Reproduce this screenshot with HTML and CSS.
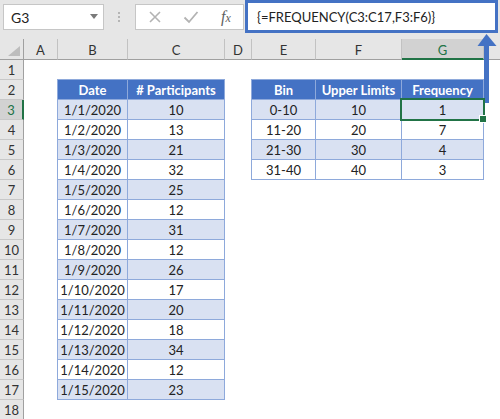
FILE: index.html
```html
<!DOCTYPE html>
<html>
<head>
<meta charset="utf-8">
<link rel="stylesheet" href="styles.css">
</head>
<body>
<div class="app">
  <div class="fbar">
    <div class="namebox"><span class="ref">G3</span><span class="dd"></span></div>
    <div class="dots"><i></i><i></i><i></i></div>
    <div class="fxbox">
      <svg class="ico" width="14" height="14" viewBox="0 0 14 14"><path d="M2 2 L12 12 M12 2 L2 12" stroke="#b3b3b3" stroke-width="1.6" fill="none"/></svg>
      <svg class="ico" width="16" height="14" viewBox="0 0 16 14"><path d="M1.5 7.5 L6 12 L14.5 2" stroke="#b3b3b3" stroke-width="1.8" fill="none"/></svg>
      <span class="fx">f<span class="fxx">x</span></span>
    </div>
    <div class="formula">{=FREQUENCY(C3:C17,F3:F6)}</div>
  </div>
  <div class="sheet">
    <div class="ch corner"><span class="tri"></span></div>
    <div class="ch">A</div>
    <div class="ch">B</div>
    <div class="ch">C</div>
    <div class="ch">D</div>
    <div class="ch">E</div>
    <div class="ch">F</div>
    <div class="ch selc">G</div>
    <div class="ch last"></div>

    <div class="rh">1</div>
    <div class="rh">2</div>
    <div class="rh selr">3</div>
    <div class="rh">4</div>
    <div class="rh">5</div>
    <div class="rh">6</div>
    <div class="rh">7</div>
    <div class="rh">8</div>
    <div class="rh">9</div>
    <div class="rh">10</div>
    <div class="rh">11</div>
    <div class="rh">12</div>
    <div class="rh">13</div>
    <div class="rh">14</div>
    <div class="rh">15</div>
    <div class="rh">16</div>
    <div class="rh">17</div>
    <div class="rh">18</div>

    <div class="tbl t1">
      <div class="row head"><div>Date</div><div># Participants</div></div>
      <div class="row band"><div>1/1/2020</div><div>10</div></div>
      <div class="row"><div>1/2/2020</div><div>13</div></div>
      <div class="row band"><div>1/3/2020</div><div>21</div></div>
      <div class="row"><div>1/4/2020</div><div>32</div></div>
      <div class="row band"><div>1/5/2020</div><div>25</div></div>
      <div class="row"><div>1/6/2020</div><div>12</div></div>
      <div class="row band"><div>1/7/2020</div><div>31</div></div>
      <div class="row"><div>1/8/2020</div><div>12</div></div>
      <div class="row band"><div>1/9/2020</div><div>26</div></div>
      <div class="row"><div>1/10/2020</div><div>17</div></div>
      <div class="row band"><div>1/11/2020</div><div>20</div></div>
      <div class="row"><div>1/12/2020</div><div>18</div></div>
      <div class="row band"><div>1/13/2020</div><div>34</div></div>
      <div class="row"><div>1/14/2020</div><div>12</div></div>
      <div class="row band"><div>1/15/2020</div><div>23</div></div>
    </div>

    <div class="tbl t2">
      <div class="row head"><div>Bin</div><div>Upper Limits</div><div>Frequency</div></div>
      <div class="row band"><div>0-10</div><div>10</div><div class="sel">1</div></div>
      <div class="row"><div>11-20</div><div>20</div><div>7</div></div>
      <div class="row band"><div>21-30</div><div>30</div><div>4</div></div>
      <div class="row"><div>31-40</div><div>40</div><div>3</div></div>
    </div>
  </div>
  <svg class="arrow" width="24" height="74" viewBox="0 0 24 74">
    <rect x="8" y="12" width="5" height="59" fill="#4472c4"/>
    <polygon points="10.5,2 1.5,14 20.5,14" fill="#4472c4"/>
  </svg>
</div>
</body>
</html>
```
FILE: styles.css
```css
* { box-sizing: border-box; }
html, body { margin: 0; padding: 0; }
body {
  width: 500px;
  height: 419px;
  overflow: hidden;
  background: #ffffff;
  font-family: Lato, "Open Sans", sans-serif;
  font-size: 13px;
  color: #222;
}
.app { position: relative; width: 500px; height: 419px; overflow: hidden; }

/* formula bar */
.fbar {
  height: 39px;
  background: #e6e6e6;
  display: flex;
  align-items: flex-start;
  padding-left: 3px;
}
.namebox {
  margin-top: 4px;
  width: 101px;
  height: 26px;
  background: #fff;
  border: 1px solid #c6c6c6;
  display: flex;
  align-items: center;
  justify-content: space-between;
  padding: 0 5px 0 7px;
  font-size: 14px;
  color: #222;
}
.dd {
  width: 0; height: 0;
  border-left: 4px solid transparent;
  border-right: 4px solid transparent;
  border-top: 5px solid #7a7a7a;
  margin-bottom: 2px;
}
.dots {
  margin: 12px 0 0 14px;
  width: 2px;
  display: flex;
  flex-direction: column;
  gap: 2px;
}
.dots i { display: block; width: 2px; height: 2px; background: #b5b5b5; }
.fxbox {
  margin: 4px 0 0 15px;
  width: 109px;
  height: 26px;
  background: #fff;
  border: 1px solid #c6c6c6;
  display: flex;
  align-items: center;
  padding-left: 12px;
}
.ico { display: block; }
.ico + .ico { margin-left: 21px; }
.fx {
  margin-left: 22px;
  font-family: "Liberation Serif", serif;
  font-style: italic;
  font-size: 16px;
  color: #5f5f5f;
  line-height: 1;
  margin-top: -1px;
}
.fxx { font-size: 12px; }
.formula {
  margin-left: 1px;
  width: 253px;
  height: 33px;
  background: #fff;
  border: 3px solid #4472c4;
  padding: 6px 0 0 9px;
  font-size: 13px;
  color: #222;
  white-space: nowrap;
}

/* sheet grid */
.sheet {
  display: grid;
  grid-template-columns: 24px 34px 70px 97px 27px 64px 86px 82px 1fr;
  grid-template-rows: 21px repeat(18, 20px);
}
.ch {
  background: #e6e6e6;
  border-right: 1px solid #c2c2c2;
  border-bottom: 1px solid #a0a0a0;
  display: flex;
  align-items: center;
  justify-content: center;
  color: #333;
  font-size: 13px;
  padding-top: 2px;
}
.ch.last { border-right: none; }
.corner { position: relative; border-right: 1px solid #a0a0a0; }
.tri {
  position: absolute;
  right: 3px;
  bottom: 3px;
  width: 0; height: 0;
  border-left: 12px solid transparent;
  border-bottom: 10px solid #bdbdbd;
}
.selc {
  background: #d2d2d2;
  color: #217346;
  border-bottom: 2px solid #217346;
}
.rh {
  grid-column: 1;
  background: #e6e6e6;
  border-right: 1px solid #a0a0a0;
  border-bottom: 1px solid #c8c8c8;
  display: flex;
  align-items: center;
  justify-content: center;
  color: #333;
  font-size: 13px;
  padding-top: 1px;
}
.selr {
  background: #d2d2d2;
  color: #217346;
  border-right: 2px solid #217346;
}

/* tables */
.tbl {
  display: grid;
  grid-auto-rows: 20px;
  margin: -1px 0 0 -1px;
  border-top: 1px solid #8ea9db;
  border-left: 1px solid #8ea9db;
  align-self: start;
}
.t1 { grid-column: 3 / 5; grid-row: 3 / 19; grid-template-columns: 70px 97px; }
.t2 { grid-column: 6 / 9; grid-row: 3 / 7; grid-template-columns: 64px 86px 82px; }
.row { display: contents; }
.row > div {
  border-right: 1px solid #8ea9db;
  border-bottom: 1px solid #8ea9db;
  text-align: center;
  line-height: 19px;
  padding-top: 1px;
  white-space: nowrap;
  background: #fff;
}
.row.band > div { background: #d9e1f2; }
.row.head > div {
  background: #4472c4;
  color: #fff;
  font-weight: bold;
}
.sel { position: relative; z-index: 1; }
.sel::after {
  content: "";
  position: absolute;
  left: -2px; top: -2px; right: -2px; bottom: -2px;
  border: 2px solid #217346;
}
.sel::before {
  content: "";
  position: absolute;
  right: -4px; bottom: -4px;
  width: 6px; height: 6px;
  background: #217346;
  border: 1px solid #fff;
  z-index: 2;
}

/* annotation arrow */
.arrow { position: absolute; left: 476px; top: 32px; }
```
